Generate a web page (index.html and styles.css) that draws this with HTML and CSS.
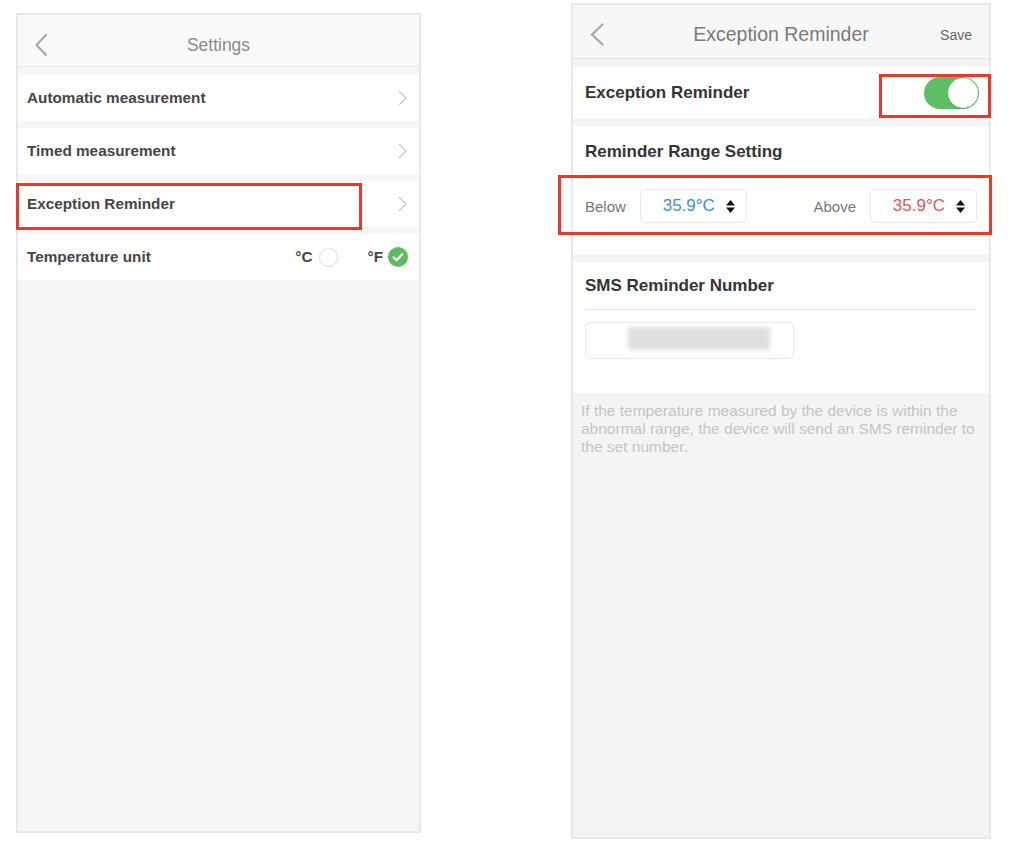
FILE: index.html
```html
<!DOCTYPE html>
<html lang="en">
<head>
<meta charset="utf-8">
<title>Settings</title>
<link rel="stylesheet" href="styles.css">
</head>
<body>
<div class="page">
  <section class="phone phone-left">
    <header class="nav nav-left">
      <span class="back"><svg width="12" height="22" viewBox="0 0 12 22"><polyline points="11,1 1.5,11 11,21" fill="none" stroke="#a9a9a9" stroke-width="2.2" stroke-linecap="round" stroke-linejoin="round"/></svg></span>
      <h1 class="nav-title">Settings</h1>
      <span class="nav-right"></span>
    </header>
    <ul class="list">
      <li class="item"><span class="item-label">Automatic measurement</span><svg class="chev" width="9" height="16" viewBox="0 0 9 16"><polyline points="1,1 8,8 1,15" fill="none" stroke="#c6c6c6" stroke-width="1.2"/></svg></li>
      <li class="item"><span class="item-label">Timed measurement</span><svg class="chev" width="9" height="16" viewBox="0 0 9 16"><polyline points="1,1 8,8 1,15" fill="none" stroke="#c6c6c6" stroke-width="1.2"/></svg></li>
      <li class="item item-marked"><span class="item-label">Exception Reminder</span><svg class="chev" width="9" height="16" viewBox="0 0 9 16"><polyline points="1,1 8,8 1,15" fill="none" stroke="#c6c6c6" stroke-width="1.2"/></svg><span class="mark mark-row"></span></li>
      <li class="item">
        <span class="item-label">Temperature unit</span>
        <span class="units">
          <span class="unit">°C</span><span class="radio"></span>
          <span class="unit unit-f">°F</span><span class="checked"><svg width="20" height="20" viewBox="0 0 20 20"><circle cx="10" cy="10" r="10" fill="#5dbb61"/><polyline points="5.6,10.4 8.7,13.3 14.4,7.3" fill="none" stroke="#fff" stroke-width="2.2" stroke-linecap="round" stroke-linejoin="round"/></svg></span>
        </span>
      </li>
    </ul>
  </section>

  <section class="phone phone-right">
    <header class="nav nav-right-panel">
      <span class="back"><svg width="14" height="23" viewBox="0 0 14 23"><polyline points="12.5,1.5 2,11.5 12.5,21.5" fill="none" stroke="#aaaaaa" stroke-width="2.4" stroke-linecap="round" stroke-linejoin="round"/></svg></span>
      <h1 class="nav-title nav-title-lg">Exception Reminder</h1>
      <span class="nav-right"><span class="save">Save</span></span>
    </header>

    <div class="toggle-row">
      <span class="row-title">Exception Reminder</span>
      <span class="switch"><span class="knob"></span></span>
      <span class="mark mark-toggle"></span>
    </div>

    <div class="card range-card">
      <div class="card-title range-title">Reminder Range Setting</div>
      <div class="range-row">
        <div class="range-group">
          <span class="range-label">Below</span>
          <span class="stepper"><span class="value value-low">35.9°C</span><svg width="9" height="15" viewBox="0 0 9 15"><polygon points="0,6.5 4.5,1 9,6.5" fill="#111"/><polygon points="0,8.5 4.5,14 9,8.5" fill="#111"/></svg></span>
        </div>
        <div class="range-group">
          <span class="range-label">Above</span>
          <span class="stepper"><span class="value value-high">35.9°C</span><svg width="9" height="15" viewBox="0 0 9 15"><polygon points="0,6.5 4.5,1 9,6.5" fill="#111"/><polygon points="0,8.5 4.5,14 9,8.5" fill="#111"/></svg></span>
        </div>
      </div>
      <span class="mark mark-range"></span>
    </div>

    <div class="card sms-card">
      <div class="card-title sms-title">SMS Reminder Number</div>
      <div class="phone-input"><span class="blurred"></span></div>
    </div>

    <p class="help">If the temperature measured by the device is within the abnormal range, the device will send an SMS reminder to the set number.</p>
  </section>
</div>
</body>
</html>
```

FILE: styles.css
```css
* { box-sizing: border-box; }

body {
  margin: 0;
  background: #ffffff;
  font-family: "Liberation Sans", Arial, sans-serif;
}

.page {
  display: flex;
  align-items: flex-start;
  gap: 150px;
  padding-left: 16px;
}

.phone {
  border: 2px solid #e8e8e8;
  position: relative;
}

.phone-left {
  width: 405px;
  height: 820px;
  margin-top: 13px;
  background: #f7f5f8;
}

.phone-right {
  width: 420px;
  height: 836px;
  margin-top: 3px;
  background: #f4f4f4;
}

/* nav bars */
.nav {
  display: grid;
  grid-template-columns: 1fr auto 1fr;
  align-items: center;
}

.nav-left {
  height: 52px;
  padding: 10px 17px 0 17px;
  background: #fbf9fc;
  border-bottom: 1px solid #e9e7eb;
}

.nav-right-panel {
  height: 54px;
  padding: 6px 17px 0 17px;
  background: #f7f7f7;
  border-bottom: 1px solid #e2e2e2;
}

.back { display: flex; }

.nav-left .back { margin-top: -2px; }

.nav-title {
  margin: 0;
  font-size: 17.5px;
  font-weight: normal;
  color: #8b8b8b;
}

.nav-title-lg {
  font-size: 19.5px;
  color: #7a7a7a;
}

.nav-right {
  display: flex;
  justify-content: flex-end;
}

.save {
  font-size: 14px;
  color: #666;
}

/* left list */
.list {
  list-style: none;
  margin: 0;
  padding: 8px 0 0 0;
  display: flex;
  flex-direction: column;
  gap: 7px;
}

.item {
  position: relative;
  height: 46px;
  background: #ffffff;
  display: flex;
  align-items: center;
  justify-content: space-between;
  padding: 0 11px 0 9px;
}

.item-label {
  font-size: 15.3px;
  font-weight: bold;
  color: #464646;
}

.chev { margin-right: 1px; }

.units {
  display: flex;
  align-items: center;
}

.unit {
  font-size: 15.3px;
  font-weight: bold;
  color: #464646;
}

.unit-f { margin-left: 30px; }

.radio {
  width: 19px;
  height: 19px;
  margin-left: 6px;
  border-radius: 50%;
  border: 1px solid #dcdcdc;
}

.checked {
  display: flex;
  margin-left: 5px;
}

/* red highlight marks */
.mark {
  position: absolute;
  border: 3px solid #e8392e;
  pointer-events: none;
}

.mark-row {
  left: -2px;
  top: 2px;
  width: 346px;
  height: 47px;
}

.mark-toggle {
  left: 306px;
  top: 7px;
  width: 112px;
  height: 44px;
}

.mark-range {
  left: -15px;
  top: 49px;
  width: 434px;
  height: 60px;
}

/* right panel */
.toggle-row {
  position: relative;
  margin-top: 8px;
  height: 51px;
  background: #ffffff;
  display: flex;
  align-items: center;
  justify-content: space-between;
  padding: 1px 10px 0 12px;
}

.row-title {
  font-size: 17px;
  font-weight: bold;
  color: #343434;
}

.switch {
  width: 55px;
  height: 32px;
  border-radius: 16px;
  background: #5dbf63;
  display: flex;
  align-items: center;
  justify-content: flex-end;
  padding: 1px;
}

.knob {
  width: 30px;
  height: 30px;
  border-radius: 50%;
  background: #ffffff;
  box-shadow: 0 1px 2px rgba(0, 0, 0, 0.15);
}

.card {
  position: relative;
  margin-top: 8px;
  background: #ffffff;
}

.range-card {
  height: 128px;
}

.card-title {
  height: 49px;
  margin: 0 12px;
  display: flex;
  align-items: center;
  font-size: 17px;
  font-weight: bold;
  color: #343434;
  border-bottom: 1px solid #efefef;
  padding-bottom: 1px;
}

.range-title {
  padding-top: 3px;
  padding-bottom: 0;
}

.range-row {
  display: flex;
  justify-content: space-between;
  align-items: center;
  padding: 14px 12px 0 12px;
}

.range-group {
  display: flex;
  align-items: center;
  gap: 14px;
}

.range-label {
  font-size: 15px;
  color: #777777;
}

.stepper {
  width: 107px;
  height: 34px;
  border: 1px solid #e9e9e9;
  border-radius: 5px;
  display: flex;
  align-items: center;
  justify-content: flex-end;
  gap: 11px;
  padding-right: 11px;
}

.value {
  font-size: 17px;
}

.value-low { color: #3d8fd5; }
.value-high { color: #d9565c; }

.sms-card {
  height: 131px;
}

.sms-title {
  height: 48px;
  border-bottom: 1px solid #e4e4e4;
  padding-bottom: 0;
}

.phone-input {
  margin: 12px 0 0 12px;
  width: 209px;
  height: 37px;
  border: 1px solid #e6e6e6;
  border-radius: 6px;
  display: flex;
  align-items: center;
  padding-left: 42px;
}

.blurred {
  width: 142px;
  height: 23px;
  border-radius: 3px;
  background: #dfdfdf;
  filter: blur(2px);
  margin-top: -4px;
}

.help {
  margin: 0;
  padding: 9px 8px 0 8px;
  font-size: 15.5px;
  line-height: 18px;
  color: #c4c4c4;
}
```
